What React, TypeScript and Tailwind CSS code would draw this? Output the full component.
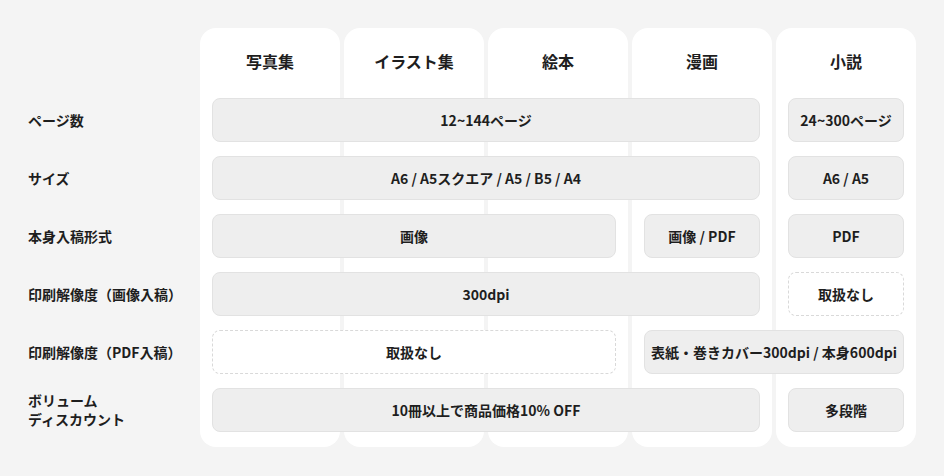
import React from "react";

const font = { fontFamily: '"Noto Sans CJK JP", "Noto Sans", sans-serif' };

const colStart = ["", "col-start-1", "col-start-2", "col-start-3", "col-start-4", "col-start-5", "col-start-6"];
const colEnd = ["", "col-end-1", "col-end-2", "col-end-3", "col-end-4", "col-end-5", "col-end-6", "col-end-7"];
const rowStart = ["", "row-start-1", "row-start-2", "row-start-3", "row-start-4", "row-start-5", "row-start-6", "row-start-7"];

type Cell = { row: number; from: number; to: number; text: string; dashed?: boolean };

const cells: Cell[] = [
  { row: 2, from: 2, to: 5, text: "12~144ページ" },
  { row: 2, from: 6, to: 6, text: "24~300ページ" },
  { row: 3, from: 2, to: 5, text: "A6 / A5スクエア / A5 / B5 / A4" },
  { row: 3, from: 6, to: 6, text: "A6 / A5" },
  { row: 4, from: 2, to: 4, text: "画像" },
  { row: 4, from: 5, to: 5, text: "画像 / PDF" },
  { row: 4, from: 6, to: 6, text: "PDF" },
  { row: 5, from: 2, to: 5, text: "300dpi" },
  { row: 5, from: 6, to: 6, text: "取扱なし", dashed: true },
  { row: 6, from: 2, to: 4, text: "取扱なし", dashed: true },
  { row: 6, from: 5, to: 6, text: "表紙・巻きカバー300dpi / 本身600dpi" },
  { row: 7, from: 2, to: 5, text: "10冊以上で商品価格10% OFF" },
  { row: 7, from: 6, to: 6, text: "多段階" },
];

const labels = ["ページ数", "サイズ", "本身入稿形式", "印刷解像度（画像入稿）", "印刷解像度（PDF入稿）"];
const heads = ["写真集", "イラスト集", "絵本", "漫画", "小説"];

export default function App() {
  return (
    <div className="w-[944px] h-[476px] bg-[#f4f4f4] text-[#1e1e1e]" style={font}>
      <div className="pt-[28px]">
        <div className="grid grid-cols-[196px_repeat(5,140px)] grid-rows-[70px_58px_58px_58px_58px_58px_59px] gap-x-1">
          {heads.map((h, i) => (
            <div key={"bg" + i} className={`${colStart[i + 2]} row-start-1 row-end-8 bg-white rounded-2xl`} />
          ))}
          {heads.map((h, i) => (
            <div
              key={"h" + i}
              className={`${colStart[i + 2]} row-start-1 flex items-center justify-center pb-[5px] text-[16px] font-bold`}
            >
              {h}
            </div>
          ))}
          {labels.map((l, i) => (
            <div key={"l" + i} className={`col-start-1 ${rowStart[i + 2]} h-[44px] flex items-center pl-[28px] text-[14px] font-bold`}>
              {l}
            </div>
          ))}
          <div className="col-start-1 row-start-7 h-[44px] flex flex-col justify-center pl-[28px] text-[14px] font-bold leading-[19px]">
            <span>ボリューム</span>
            <span>ディスカウント</span>
          </div>
          {cells.map((c, i) => (
            <div
              key={"c" + i}
              className={`${colStart[c.from]} ${colEnd[c.to + 1]} ${rowStart[c.row]} mx-3 h-[44px] rounded-lg flex items-center justify-center whitespace-nowrap text-[14px] font-bold ${
                c.dashed ? "bg-white border border-dashed border-[#d9d9d9]" : "bg-[#eeeeee] border border-[#e2e2e2]"
              }`}
            >
              {c.text}
            </div>
          ))}
        </div>
      </div>
    </div>
  );
}
